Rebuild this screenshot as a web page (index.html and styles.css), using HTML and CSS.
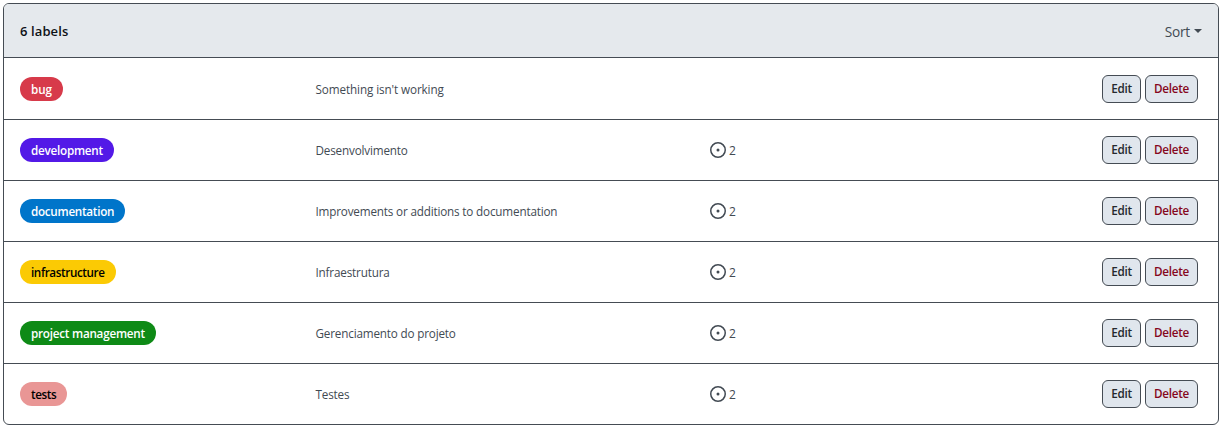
FILE: index.html
```html
<!DOCTYPE html>
<html lang="en">
<head>
<meta charset="utf-8">
<title>Labels</title>
<link rel="stylesheet" href="styles.css">
</head>
<body>
<main class="box">
  <header class="head"><h1 class="title">6 labels</h1><button class="sort"><span>Sort</span><i class="caret"></i></button></header>
  <ul class="list" id="list"></ul>
</main>
<script src="app.js"></script>
</body>
</html>
```
FILE: styles.css
```css
* { box-sizing: border-box; }
body { margin: 0; background: #fff; font-family: "Open Sans", "Noto Sans", sans-serif; color: #0e1116; }
.box { margin: 3px 3px 0; width: 1216px; height: 422px; border: 1px solid #454c54; border-radius: 6px; overflow: hidden; }
.head { height: 54px; background: #e5e9ed; border-bottom: 1px solid #454c54; display: flex; align-items: center; justify-content: space-between; padding: 0 16px; }
.title { margin: 0; font-size: 13px; font-weight: 600; letter-spacing: 0.1px; }
.sort { border: 0; background: none; padding: 1px 0 0; font: 13.7px "Open Sans", sans-serif; letter-spacing: -0.25px; color: #424a53; display: flex; align-items: center; gap: 4px; }
.caret { border: 4px solid transparent; border-top-color: currentColor; border-bottom: 0; }
.list { list-style: none; margin: 0; padding: 0; }
.row { height: 61px; border-top: 1px solid #454c54; display: grid; grid-template-columns: 295.5px 394.5px 1fr auto; align-items: start; padding: 16px 20px 0 16px; }
.row:first-child { border-top: 0; padding-top: 17px; }
.pill { display: block; margin-top: 2px; height: 24px; line-height: 25px; padding: 0 11px; border-radius: 12px; font-size: 11.7px; font-weight: 600; white-space: nowrap; }
.bug { width: 43px; background: #d73a4a; color: #fff; letter-spacing: -0.15px; }
.development { width: 94px; background: #5319e7; color: #fff; letter-spacing: -0.25px; }
.documentation { width: 105px; background: #0075ca; color: #fff; letter-spacing: -0.28px; }
.infrastructure { width: 96px; background: #fbca04; color: #000; letter-spacing: -0.4px; }
.project { width: 136px; background: #0e8a16; color: #fff; letter-spacing: -0.24px; }
.tests { width: 47px; background: #e99695; color: #000; letter-spacing: -0.4px; }
.desc { font-size: 11.7px; line-height: 28px; letter-spacing: -0.17px; color: #424a53; }
.row:first-child .desc { letter-spacing: -0.1px; }
.count { display: flex; align-items: center; height: 28px; gap: 3px; font-size: 12px; color: #424a53; }
.count svg { fill: currentColor; }
.actions { display: flex; gap: 4px; }
.btn { width: 39px; height: 28px; border: 1px solid #454c54; border-radius: 6px; background: #e0e6ed; padding: 0 0 2px; font: 600 11.7px "Open Sans", sans-serif; letter-spacing: -0.25px; color: #25292e; }
.danger { width: 53px; color: #86061d; }
```
FILE: app.js
```js
const rows = [
  ["bug", "bug", "Something isn't working"],
  ["development", "development", "Desenvolvimento", 2],
  ["documentation", "documentation", "Improvements or additions to documentation", 2],
  ["infrastructure", "infrastructure", "Infraestrutura", 2],
  ["project management", "project", "Gerenciamento do projeto", 2],
  ["tests", "tests", "Testes", 2],
];
const icon = `<svg width="16" height="16" viewBox="0 0 16 16"><path d="M8 9.5a1.5 1.5 0 1 0 0-3 1.5 1.5 0 0 0 0 3Z"/><path d="M8 0a8 8 0 1 1 0 16A8 8 0 0 1 8 0ZM1.5 8a6.5 6.5 0 1 0 13 0 6.5 6.5 0 0 0-13 0Z"/></svg>`;
document.getElementById("list").innerHTML = rows.map(([name, cls, desc, count]) => `<li class="row"><span class="pill ${cls}">${name}</span><span class="desc">${desc}</span><span class="count">${count ? icon + `<span>${count}</span>` : ""}</span><div class="actions"><button class="btn">Edit</button><button class="btn danger">Delete</button></div></li>`).join("");
```
